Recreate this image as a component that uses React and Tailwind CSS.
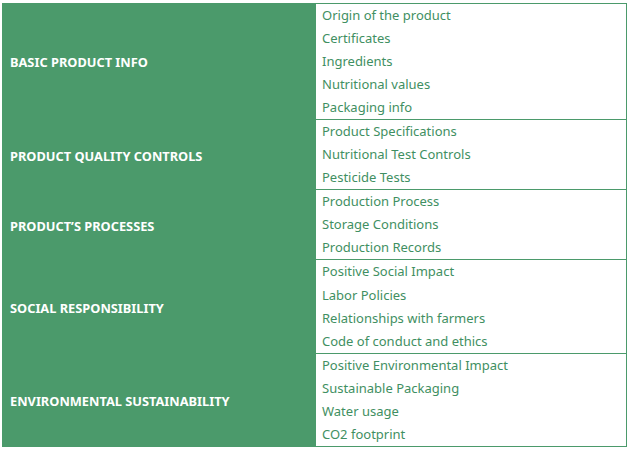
import React from 'react';

const sections = [
  {
    title: 'BASIC PRODUCT INFO',
    items: ['Origin of the product', 'Certificates', 'Ingredients', 'Nutritional values', 'Packaging info'],
    grow: 'flex-[5]',
  },
  {
    title: 'PRODUCT QUALITY CONTROLS',
    items: ['Product Specifications', 'Nutritional Test Controls', 'Pesticide Tests'],
    grow: 'flex-[3]',
  },
  {
    title: 'PRODUCT’S PROCESSES',
    items: ['Production Process', 'Storage Conditions', 'Production Records'],
    grow: 'flex-[3]',
  },
  {
    title: 'SOCIAL RESPONSIBILITY',
    items: ['Positive Social Impact', 'Labor Policies', 'Relationships with farmers', 'Code of conduct and ethics'],
    grow: 'flex-[4]',
  },
  {
    title: 'ENVIRONMENTAL SUSTAINABILITY',
    items: ['Positive Environmental Impact', 'Sustainable Packaging', 'Water usage', 'CO2 footprint'],
    grow: 'flex-[4]',
  },
];

export default function App() {
  return (
    <div className="w-[632px] h-[452px] bg-white pt-[3px] pl-[2px]" style={{ fontFamily: '"Noto Sans", "Open Sans", sans-serif' }}>
      <div className="w-[625px] h-[444px] flex flex-col">
        {sections.map((s, i) => (
          <div key={s.title} className={`${s.grow} basis-0 flex min-h-0`}>
            {/* label cell */}
            <div className="w-[314px] bg-[#4b9a6b] flex items-center pl-[8px] pt-[3px]">
              <span className="text-white font-bold text-[12.8px]">{s.title}</span>
            </div>
            {/* item list */}
            <div
              className={`flex-1 flex flex-col border-r border-b border-[#4b9a6b] ${i === 0 ? 'border-t' : ''}`}
            >
              {s.items.map(item => (
                <div key={item} className="flex-1 flex items-center pl-[6px] pt-[1px] text-[13px] text-[#3f8f62]">
                  {item}
                </div>
              ))}
            </div>
          </div>
        ))}
      </div>
    </div>
  );
}
